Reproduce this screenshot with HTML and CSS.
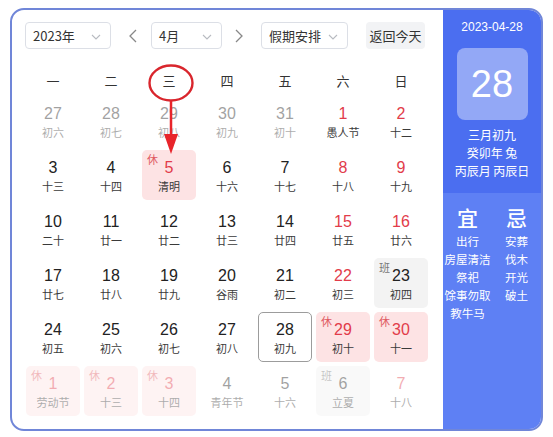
FILE: index.html
```html
<!DOCTYPE html>
<html lang="zh-CN">
<head>
<meta charset="utf-8">
<title>日历</title>
<link rel="stylesheet" href="styles.css">
</head>
<body>
<div class="card">
  <div class="main">
    <div class="toolbar">
      <div class="select w86"><span>2023年</span><svg class="chev" viewBox="0 0 10 6"><polyline points="1,1 5,5 9,1"/></svg></div>
      <div class="nav nav1"><svg class="arrow" viewBox="0 0 8 14"><polyline points="7,1 1,7 7,13"/></svg></div>
      <div class="select w71"><span>4月</span><svg class="chev" viewBox="0 0 10 6"><polyline points="1,1 5,5 9,1"/></svg></div>
      <div class="nav nav2"><svg class="arrow" viewBox="0 0 8 14"><polyline points="1,1 7,7 1,13"/></svg></div>
      <div class="select w87"><span>假期安排</span><svg class="chev" viewBox="0 0 10 6"><polyline points="1,1 5,5 9,1"/></svg></div>
      <div class="btn">返回今天</div>
    </div>
    <div class="weekdays">
      <div>一</div><div>二</div><div>三</div><div>四</div><div>五</div><div>六</div><div>日</div>
    </div>
    <div class="grid">
      <div class="cell om"><div class="num">27</div><div class="lunar">初六</div></div>
      <div class="cell om"><div class="num">28</div><div class="lunar">初七</div></div>
      <div class="cell om"><div class="num">29</div><div class="lunar">初八</div></div>
      <div class="cell om"><div class="num">30</div><div class="lunar">初九</div></div>
      <div class="cell om"><div class="num">31</div><div class="lunar">初十</div></div>
      <div class="cell red"><div class="num">1</div><div class="lunar">愚人节</div></div>
      <div class="cell red"><div class="num">2</div><div class="lunar">十二</div></div>

      <div class="cell"><div class="num">3</div><div class="lunar">十三</div></div>
      <div class="cell"><div class="num">4</div><div class="lunar">十四</div></div>
      <div class="cell red hol"><span class="tag">休</span><div class="num">5</div><div class="lunar">清明</div></div>
      <div class="cell"><div class="num">6</div><div class="lunar">十六</div></div>
      <div class="cell"><div class="num">7</div><div class="lunar">十七</div></div>
      <div class="cell red"><div class="num">8</div><div class="lunar">十八</div></div>
      <div class="cell red"><div class="num">9</div><div class="lunar">十九</div></div>

      <div class="cell"><div class="num">10</div><div class="lunar">二十</div></div>
      <div class="cell"><div class="num">11</div><div class="lunar">廿一</div></div>
      <div class="cell"><div class="num">12</div><div class="lunar">廿二</div></div>
      <div class="cell"><div class="num">13</div><div class="lunar">廿三</div></div>
      <div class="cell"><div class="num">14</div><div class="lunar">廿四</div></div>
      <div class="cell red"><div class="num">15</div><div class="lunar">廿五</div></div>
      <div class="cell red"><div class="num">16</div><div class="lunar">廿六</div></div>

      <div class="cell"><div class="num">17</div><div class="lunar">廿七</div></div>
      <div class="cell"><div class="num">18</div><div class="lunar">廿八</div></div>
      <div class="cell"><div class="num">19</div><div class="lunar">廿九</div></div>
      <div class="cell"><div class="num">20</div><div class="lunar">谷雨</div></div>
      <div class="cell"><div class="num">21</div><div class="lunar">初二</div></div>
      <div class="cell red"><div class="num">22</div><div class="lunar">初三</div></div>
      <div class="cell work"><span class="tag">班</span><div class="num">23</div><div class="lunar">初四</div></div>

      <div class="cell"><div class="num">24</div><div class="lunar">初五</div></div>
      <div class="cell"><div class="num">25</div><div class="lunar">初六</div></div>
      <div class="cell"><div class="num">26</div><div class="lunar">初七</div></div>
      <div class="cell"><div class="num">27</div><div class="lunar">初八</div></div>
      <div class="cell today"><div class="num">28</div><div class="lunar">初九</div></div>
      <div class="cell red hol"><span class="tag">休</span><div class="num">29</div><div class="lunar">初十</div></div>
      <div class="cell red hol"><span class="tag">休</span><div class="num">30</div><div class="lunar">十一</div></div>

      <div class="cell om red hol"><span class="tag">休</span><div class="num">1</div><div class="lunar">劳动节</div></div>
      <div class="cell om red hol"><span class="tag">休</span><div class="num">2</div><div class="lunar">十三</div></div>
      <div class="cell om red hol"><span class="tag">休</span><div class="num">3</div><div class="lunar">十四</div></div>
      <div class="cell om"><div class="num">4</div><div class="lunar">青年节</div></div>
      <div class="cell om"><div class="num">5</div><div class="lunar">十六</div></div>
      <div class="cell om work"><span class="tag">班</span><div class="num">6</div><div class="lunar">立夏</div></div>
      <div class="cell om red"><div class="num">7</div><div class="lunar">十八</div></div>
    </div>
    <svg class="mark" viewBox="0 0 431 421">
      <ellipse cx="159" cy="73" rx="21.5" ry="17.5"/>
      <line x1="159" y1="91" x2="159" y2="128"/>
      <polygon points="152,124 166,124 159,144"/>
    </svg>
  </div>
  <div class="side">
    <div class="side-top">
      <div class="s-date">2023-04-28</div>
      <div class="s-day">28</div>
      <div class="s-info">
        <div>三月初九</div>
        <div>癸卯年 兔</div>
        <div>丙辰月 丙辰日</div>
      </div>
    </div>
    <div class="side-bottom">
      <div class="col">
        <div class="big">宜</div>
        <div>出行</div>
        <div>房屋清洁</div>
        <div>祭祀</div>
        <div>馀事勿取</div>
        <div>教牛马</div>
      </div>
      <div class="col">
        <div class="big">忌</div>
        <div>安葬</div>
        <div>伐木</div>
        <div>开光</div>
        <div>破土</div>
      </div>
    </div>
  </div>
</div>
</body>
</html>
```
FILE: styles.css
```css
* { box-sizing: border-box; }
html, body { margin: 0; padding: 0; background: #fff; }
body {
  font-family: "Liberation Sans", "Noto Sans CJK SC", sans-serif;
  color: #222;
}
.card {
  margin: 8px 0 0 10px;
  width: 533px;
  height: 423px;
  border: 2px solid #7086d8;
  border-radius: 14px;
  overflow: hidden;
  display: flex;
  background: #fff;
}
.main {
  position: relative;
  width: 431px;
  flex: 0 0 431px;
  padding: 12px 0 0 14px;
}
.toolbar {
  display: flex;
  align-items: center;
  height: 27px;
  margin-left: -1px;
}
.select {
  height: 27px;
  border: 1px solid #dcdfe6;
  border-radius: 4px;
  display: flex;
  align-items: center;
  justify-content: space-between;
  padding: 0 9px 0 7px;
  font-size: 13px;
  color: #333;
  font-family: "Noto Sans CJK SC", sans-serif;
}
.select span { line-height: 1; }
.w86 { width: 86px; }
.w71 { width: 71px; }
.w87 { width: 87px; }
.chev { width: 10px; height: 6px; margin-top: 2px; fill: none; stroke: #b8bbc1; stroke-width: 1.1; }
.nav { display: flex; align-items: center; justify-content: center; height: 27px; }
.nav1 { width: 40px; padding-left: 3px; }
.nav2 { width: 39px; padding-right: 6px; }
.arrow { width: 8px; height: 14px; fill: none; stroke: #888; stroke-width: 1.3; }
.btn {
  margin-left: 18px;
  width: 59px;
  height: 27px;
  background: #f2f3f5;
  border-radius: 4px;
  font-size: 13px;
  color: #333;
  display: flex;
  align-items: center;
  justify-content: center;
  font-family: "Noto Sans CJK SC", sans-serif;
}
.weekdays {
  margin-top: 15px;
  display: grid;
  grid-template-columns: repeat(7, 54px);
  column-gap: 4px;
  height: 32px;
  align-items: center;
  text-align: center;
  font-size: 13px;
  color: #333;
  font-family: "Noto Sans CJK SC", sans-serif;
}
.grid {
  display: grid;
  grid-template-columns: repeat(7, 54px);
  grid-auto-rows: 50px;
  gap: 4px;
}
.cell {
  position: relative;
  text-align: center;
  padding-top: 8px;
  border-radius: 5px;
}
.num { font-size: 16px; line-height: 20px; color: #222; }
.lunar {
  font-size: 11px;
  line-height: 16px;
  color: #3a3a3a;
  font-family: "Noto Sans CJK SC", sans-serif;
}
.red .num { color: #e23c4a; }
.hol { background: #fde3e4; }
.work { background: #f3f3f3; }
.tag {
  position: absolute;
  top: 2px;
  left: 5px;
  font-size: 11px;
  line-height: 14px;
  font-family: "Noto Sans CJK SC", sans-serif;
}
.hol .tag { color: #e05a62; }
.work .tag { color: #777; }
.today { border: 1.5px solid #9c9c9c; padding-top: 6.5px; }
.om { opacity: 0.42; }
.mark {
  position: absolute;
  left: 0;
  top: 0;
  width: 431px;
  height: 421px;
  pointer-events: none;
}
.mark ellipse { fill: none; stroke: #d9262d; stroke-width: 2.4; }
.mark line { stroke: #e8252b; stroke-width: 2.5; }
.mark polygon { fill: #e8252b; }
.side {
  flex: 0 0 98px;
  width: 98px;
  display: flex;
  flex-direction: column;
  color: #fff;
  font-family: "Noto Sans CJK SC", sans-serif;
}
.side-top {
  background: #4b6ef0;
  height: 183px;
  padding-top: 8px;
  text-align: center;
}
.s-date { font-size: 12px; line-height: 18px; font-family: "Liberation Sans", sans-serif; }
.s-day {
  margin: 12px auto 0;
  width: 71px;
  height: 72px;
  border-radius: 8px;
  background: rgba(255, 255, 255, 0.4);
  font-size: 38px;
  line-height: 72px;
  font-family: "Liberation Sans", sans-serif;
}
.s-info { margin-top: 6px; font-size: 12px; line-height: 18px; }
.side-bottom {
  flex: 1;
  background: #5e80f4;
  display: grid;
  grid-template-columns: 49px 49px;
  padding-top: 9px;
  text-align: center;
  font-size: 11.5px;
  line-height: 18px;
}
.col { display: flex; flex-direction: column; align-items: center; white-space: nowrap; }
.big { font-size: 21px; line-height: 30px; font-weight: 500; }
```
